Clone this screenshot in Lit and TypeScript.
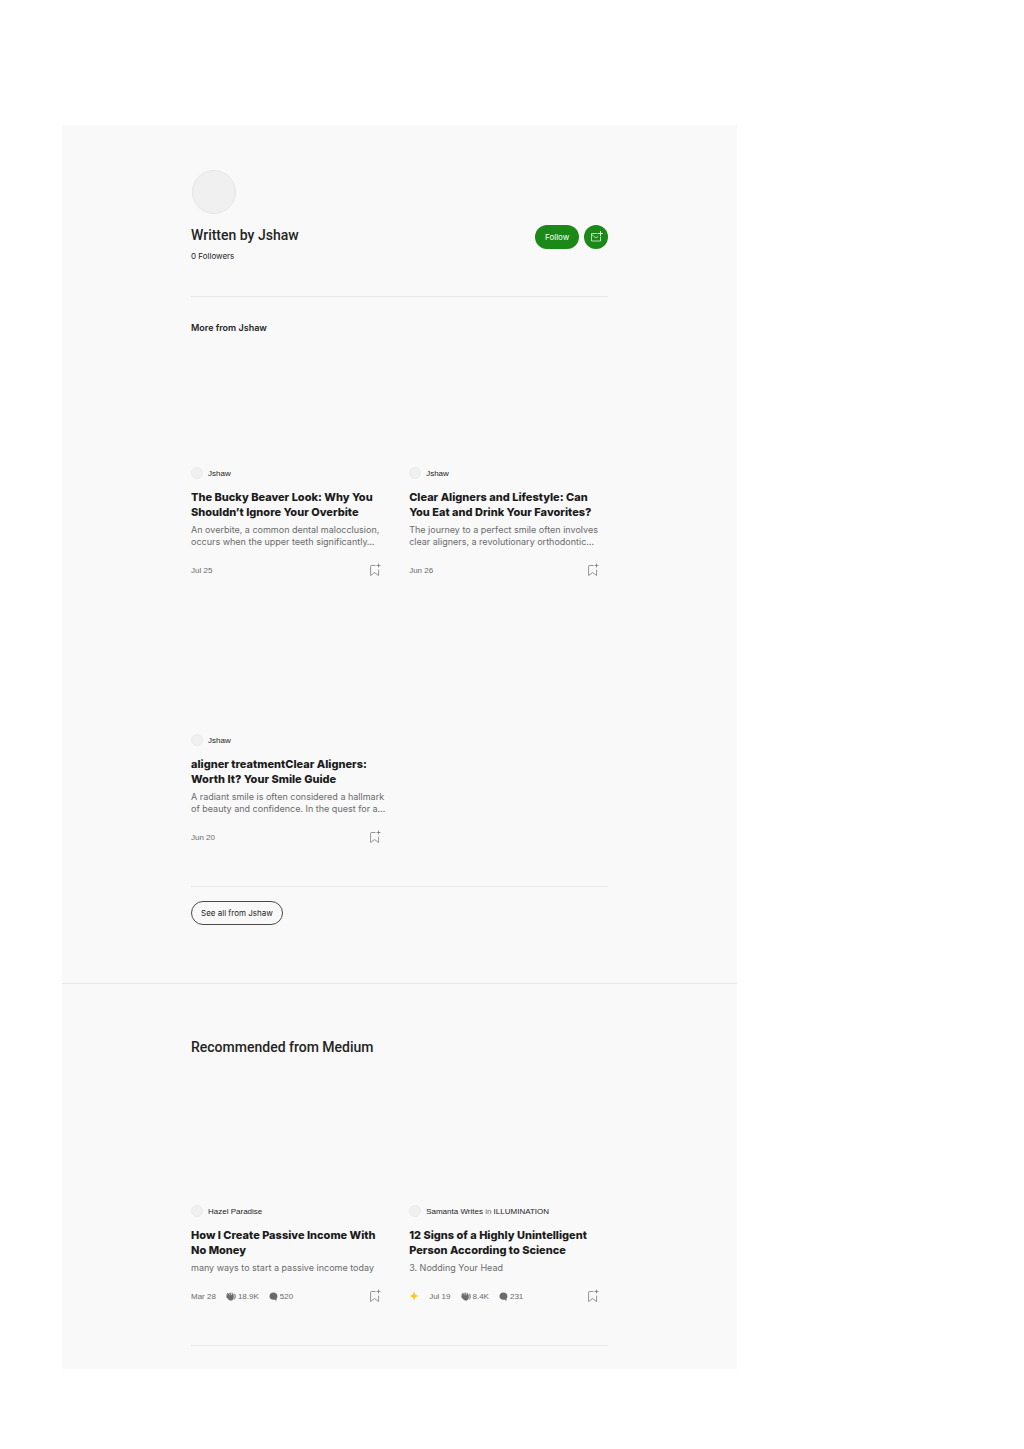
import { LitElement, html, css, svg, nothing } from "lit";
import { customElement, property } from "lit/decorators.js";

interface Story {
  author: string;
  publication?: string;
  title: string;
  summary: string;
  date: string;
  member?: boolean;
  claps?: string;
  replies?: string;
}

const fromAuthor: Story[] = [
  {
    author: "Jshaw",
    title: "The Bucky Beaver Look: Why You Shouldn’t Ignore Your Overbite",
    summary: "An overbite, a common dental malocclusion, occurs when the upper teeth significantly…",
    date: "Jul 25",
  },
  {
    author: "Jshaw",
    title: "Clear Aligners and Lifestyle: Can You Eat and Drink Your Favorites?",
    summary: "The journey to a perfect smile often involves clear aligners, a revolutionary orthodontic…",
    date: "Jun 26",
  },
  {
    author: "Jshaw",
    title: "aligner treatmentClear Aligners: Worth It? Your Smile Guide",
    summary: "A radiant smile is often considered a hallmark of beauty and confidence. In the quest for a…",
    date: "Jun 20",
  },
];

const recommended: Story[] = [
  {
    author: "Hazel Paradise",
    title: "How I Create Passive Income With No Money",
    summary: "many ways to start a passive income today",
    date: "Mar 28",
    claps: "18.9K",
    replies: "520",
  },
  {
    author: "Samanta Writes",
    publication: "ILLUMINATION",
    title: "12 Signs of a Highly Unintelligent Person According to Science",
    summary: "3. Nodding Your Head",
    date: "Jul 19",
    member: true,
    claps: "8.4K",
    replies: "231",
  },
];

const bookmarkIcon = svg`<svg viewBox="0 0 16 16" width="16" height="16" fill="none" stroke="#6b6b6b" stroke-width="0.7" aria-hidden="true">
  <path d="M8.500 3.500H4.400a.8.8 0 0 0-.8.8v9.200L7.600 10.600l4 2.900V7.600"/><path d="M11.500 1.500v4M9.500 3.500h4"/></svg>`;

const clapIcon = svg`<svg viewBox="0 0 20 18" width="10" height="9" fill="#6b6b6b" aria-hidden="true">
  <path d="M.8 5.200c.5-.7 1.200-.7 1.800-.1l2.300 2.300L2.400 3.800c-.5-.8-.3-1.500.3-1.900.7-.4 1.300-.2 1.800.4l3 3.800 1.500 1.400-2.300-4c-.4-.9-.2-1.600.4-1.900.7-.3 1.300 0 1.700.6l3.200 4.900.3-2.300c.2-1 .8-1.500 1.600-1.300.8.200 1.100.8 1.200 1.700l.5 4.600c.3 3-1 5.700-3.400 6.900-2.500 1.200-5.300.5-7.300-1.600L.7 10.400c-.6-.7-.5-1.300 0-1.700.4-.4.9-.4 1.400 0L1 6.900c-.5-.6-.5-1.200-.2-1.700z"/>
  <path d="M16.800 3.400c1-.4 1.900.2 2 1.200l.5 4.300c.3 3-.9 5.400-3.200 6.900 1-1.900 1.300-3.900 1-6.100zM11 2.500c.7-.8 1.700-.6 2.200.2l.8 1.400-1.200 1.900z"/>
  <path d="M9.500 0v1.200M11.900.2l-.4 1.100" stroke="#6b6b6b" stroke-width=".8"/></svg>`;

const replyIcon = svg`<svg viewBox="0 0 18 18" width="9" height="9" fill="#6b6b6b" aria-hidden="true">
  <path d="M8.800 1C4.400 1 .9 4.200.9 8.300s3.500 7.200 7.900 7.200c.9 0 1.800-.1 2.700-.4.8 1 1.900 1.800 3.200 2.200.5.100.8-.3.600-.8-.5-1-.6-2.100-.3-3.200 1.200-1.300 1.900-3 1.900-5C16.900 4.200 13.200 1 8.800 1z"/></svg>`;

const starIcon = svg`<svg viewBox="0 0 16 16" width="10" height="10" fill="#ffc017" aria-hidden="true">
  <path d="M8 .5 9.700 5.600c.1.400.4.600.7.700L15.500 8l-5.100 1.700c-.3.100-.6.300-.7.700L8 15.500l-1.700-5.100c-.1-.4-.4-.6-.7-.7L.5 8l5.100-1.700c.3-.1.600-.3.700-.7z"/></svg>`;

const mailIcon = svg`<svg viewBox="0 0 24 24" width="24" height="24" fill="none" stroke="#fff" stroke-width="0.7" aria-hidden="true">
  <path d="M13.500 8.500H7.500v7.500h9v-4.500"/><path d="m7.500 9.500 4.500 3.500 2.300-1.700"/><path d="M16.500 6.300v4.400M14.300 8.500h4.400" stroke-width="1"/></svg>`;

@customElement("story-card")
export class StoryCard extends LitElement {
  @property({ attribute: false }) story!: Story;

  static styles = css`
    :host { display: block; min-width: 0; font-family: "Liberation Sans", Arial, sans-serif; }
    a { color: inherit; text-decoration: none; }
    .thumb { display: block; height: 100px; margin-bottom: 10px; }
    .byline { display: flex; align-items: center; gap: 5px; height: 14px; font-size: 8px; color: #242424; }
    .face { box-sizing: border-box; width: 12px; height: 12px; border-radius: 50%; background: #f0f0f0; border: 1px solid #ececec; }
    .in { color: #6b6b6b; }
    .title, .summary { font-family: Inter, "Liberation Sans", sans-serif; }
    .title { margin: 10px 0 4px; font-size: 11px; line-height: 15px; font-weight: 800; color: #1c1c1c; }
    .summary { margin: 0; font-size: 9px; line-height: 12px; color: #6b6b6b; }
    .meta { display: flex; align-items: center; height: 16px; margin-top: 14px; padding-right: 7px; gap: 10px; font-size: 8px; color: #6b6b6b; }
    .stat { display: flex; align-items: center; gap: 2px; }
    .save { display: flex; margin-left: auto; padding: 0; border: 0; background: none; cursor: pointer; }
    svg { display: block; }
  `;

  render() {
    const s = this.story;
    return html`
      <article>
        <a class="thumb" href="#" aria-label=${s.title}></a>
        <div class="byline">
          <span class="face"></span>
          <span><a href="#">${s.author}</a>${s.publication
            ? html` <span class="in">in</span> <a href="#">${s.publication}</a>`
            : nothing}</span>
        </div>
        <h2 class="title"><a href="#">${s.title}</a></h2>
        <p class="summary">${s.summary}</p>
        <div class="meta">
          ${s.member ? html`<span>${starIcon}</span>` : nothing}
          <span>${s.date}</span>
          ${s.claps ? html`<span class="stat">${clapIcon}${s.claps}</span>` : nothing}
          ${s.replies ? html`<span class="stat">${replyIcon}${s.replies}</span>` : nothing}
          <button class="save" aria-label="Save story">${bookmarkIcon}</button>
        </div>
      </article>
    `;
  }
}

@customElement("app-root")
export class AppRoot extends LitElement {
  static styles = css`
    :host {
      display: block;
      padding: 125px 28% 80px 62px;
      background: #fff;
      color: #242424;
      font-family: Inter, "Liberation Sans", sans-serif;
    }
    .panel { background: #f9f9f9; }
    .section { padding: 45px 129px 58px; }
    .section.more { padding: 55px 129px 23px; border-top: 1px solid #e8e8e8; }
    .avatar { box-sizing: border-box; width: 44px; height: 44px; margin-left: 1px; border-radius: 50%; background: #f0f0f0; border: 1px solid #e6e6e6; }
    .profile { display: flex; justify-content: space-between; align-items: flex-start; padding: 11px 0 33px; border-bottom: 1px solid #e8e8e8; }
    .name, .heading { font-family: Roboto, sans-serif; font-size: 14px; font-weight: 500; }
    .name { margin: 0; line-height: 20px; }
    .followers { display: block; margin-top: 4px; font-size: 8px; line-height: 14px; color: inherit; text-decoration: none; }
    .actions { display: flex; gap: 5px; }
    button { font-family: inherit; cursor: pointer; }
    .follow { height: 24px; padding: 0 10px; border: 0; border-radius: 12px; background: #1a8917; color: #fff; font-size: 8px; }
    .mail { width: 24px; height: 24px; padding: 0; border: 0; border-radius: 50%; background: #1a8917; }
    svg { display: block; }
    .subhead { margin: 24px 0 21px; font-size: 9px; line-height: 14px; font-weight: 600; }
    .heading { margin: 0 0 39px; line-height: 16px; }
    .grid { display: grid; grid-template-columns: repeat(2, minmax(0, 1fr)); gap: 45px 19px; padding-bottom: 41px; border-bottom: 1px solid #e8e8e8; }
    .all { height: 24px; margin-top: 14px; padding: 0 9px; border: 1px solid #4a4a4a; border-radius: 12px; background: none; color: #242424; font-size: 8px; }
  `;

  render() {
    return html`
      <main class="panel">
        <section class="section">
          <div class="avatar"></div>
          <header class="profile">
            <div>
              <h2 class="name">Written by Jshaw</h2>
              <a class="followers" href="#">0 Followers</a>
            </div>
            <div class="actions">
              <button class="follow">Follow</button>
              <button class="mail" aria-label="Subscribe by email">${mailIcon}</button>
            </div>
          </header>
          <h2 class="subhead">More from Jshaw</h2>
          <div class="grid">${fromAuthor.map((s) => html`<story-card .story=${s}></story-card>`)}</div>
          <button class="all">See all from Jshaw</button>
        </section>
        <section class="section more">
          <h2 class="heading">Recommended from Medium</h2>
          <div class="grid">${recommended.map((s) => html`<story-card .story=${s}></story-card>`)}</div>
        </section>
      </main>
    `;
  }
}
